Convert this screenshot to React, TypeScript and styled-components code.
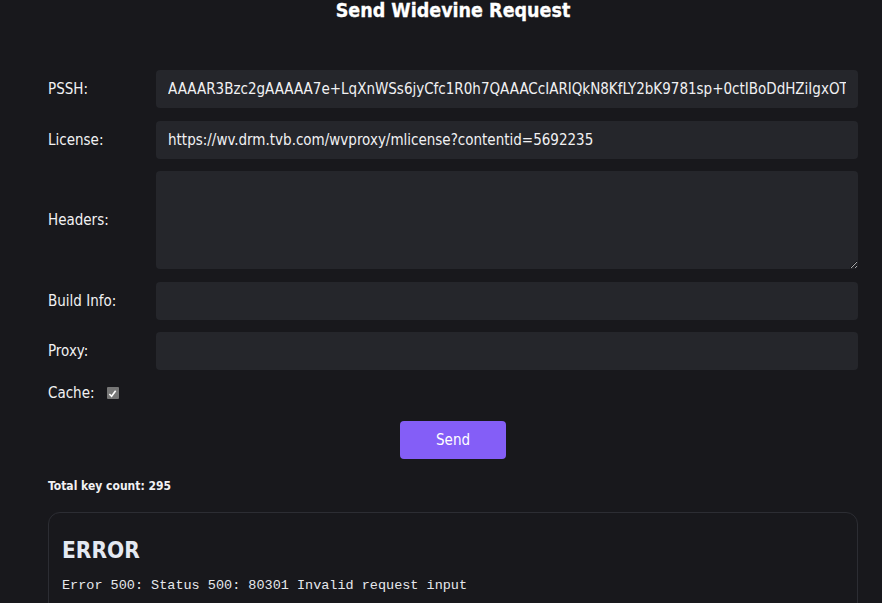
import React from 'react'
import styled, { createGlobalStyle } from 'styled-components'

const GlobalStyle = createGlobalStyle`
  html, body {
    margin: 0;
    padding: 0;
    background: #18181c;
  }
  body {
    font-family: 'DejaVu Sans Condensed', 'Liberation Sans', sans-serif;
    color: #f1f1f3;
  }
`

const Page = styled.div`
  padding: 0 24px 0 48px;
  min-height: 603px;
  box-sizing: border-box;
`

const Title = styled.h1`
  margin: 0;
  font-size: 19.5px;
  line-height: 22px;
  font-weight: bold;
  text-align: center;
  color: #ffffff;
  -webkit-text-stroke: 0.3px #ffffff;
`

const Form = styled.div`
  margin-top: 48px;
  display: grid;
  grid-template-columns: 108px 1fr;
  row-gap: 12.5px;
  align-items: center;
`

const Label = styled.label`
  font-size: 15px;
  color: #f1f1f3;
`

const Field = styled.input`
  height: 38px;
  box-sizing: border-box;
  width: 100%;
  padding: 0 12px;
  border: none;
  border-radius: 4px;
  background: #25262b;
  color: #f1f1f3;
  font-family: inherit;
  font-size: 15px;
  outline: none;
`

const Area = styled.textarea`
  height: 98px;
  box-sizing: border-box;
  width: 100%;
  display: block;
  padding: 8px 12px;
  border: none;
  border-radius: 4px;
  background: #25262b;
  color: #f1f1f3;
  font-family: inherit;
  font-size: 15px;
  outline: none;
  resize: vertical;
  color-scheme: dark;
`

const CacheRow = styled.div`
  display: flex;
  align-items: center;
  gap: 12px;
  margin-top: 14px;
  font-size: 15px;
`

const Check = styled.span`
  width: 12px;
  height: 12px;
  border-radius: 1px;
  background: #767676;
  display: inline-flex;
  align-items: center;
  justify-content: center;
`

const Actions = styled.div`
  display: flex;
  justify-content: center;
  margin-top: 19px;
`

const SendButton = styled.button`
  width: 106px;
  height: 38px;
  border: none;
  border-radius: 4px;
  background: #845ef7;
  color: #ffffff;
  font-family: inherit;
  font-size: 15px;
  cursor: pointer;
`

const KeyCount = styled.div`
  margin-top: 20px;
  font-size: 12px;
  font-weight: bold;
  color: #f1f1f3;
`

const ErrorCard = styled.div`
  margin-top: 19px;
  border: 1px solid #2c2d33;
  border-radius: 12px;
  padding: 24px 13px 20px;
  min-height: 120px;
`

const ErrorTitle = styled.h2`
  margin: 0;
  font-size: 22.5px;
  line-height: 26px;
  font-weight: bold;
  color: #e4e9f2;
`

const ErrorText = styled.pre`
  margin: 15px 0 0;
  font-family: 'Liberation Mono', monospace;
  font-size: 13.5px;
  color: #e6e8ec;
`

const PSSH =
  'AAAAR3Bzc2gAAAAA7e+LqXnWSs6jyCfc1R0h7QAAACcIARIQkN8KfLY2bK9781sp+0ctIBoDdHZiIgxOTE5NjkyMjM1X0hEMgdwMTkyMzE='

export default function App() {
  return (
    <>
      <GlobalStyle />
      <Page>
        <Title>Send Widevine Request</Title>
        <Form>
          <Label>PSSH:</Label>
          <Field defaultValue={PSSH} />
          <Label>License:</Label>
          <Field defaultValue="https://wv.drm.tvb.com/wvproxy/mlicense?contentid=5692235" />
          <Label>Headers:</Label>
          <Area />
          <Label>Build Info:</Label>
          <Field />
          <Label>Proxy:</Label>
          <Field />
        </Form>
        <CacheRow>
          <span>Cache:</span>
          <Check>
            <svg width="9" height="9" viewBox="0 0 10 10">
              <path d="M1.5 5.5 L4 8 L8.5 2" stroke="#fff" strokeWidth="1.8" fill="none" />
            </svg>
          </Check>
        </CacheRow>
        <Actions>
          <SendButton>Send</SendButton>
        </Actions>
        <KeyCount>Total key count: 295</KeyCount>
        <ErrorCard>
          <ErrorTitle>ERROR</ErrorTitle>
          <ErrorText>Error 500: Status 500: 80301 Invalid request input</ErrorText>
        </ErrorCard>
      </Page>
    </>
  )
}
